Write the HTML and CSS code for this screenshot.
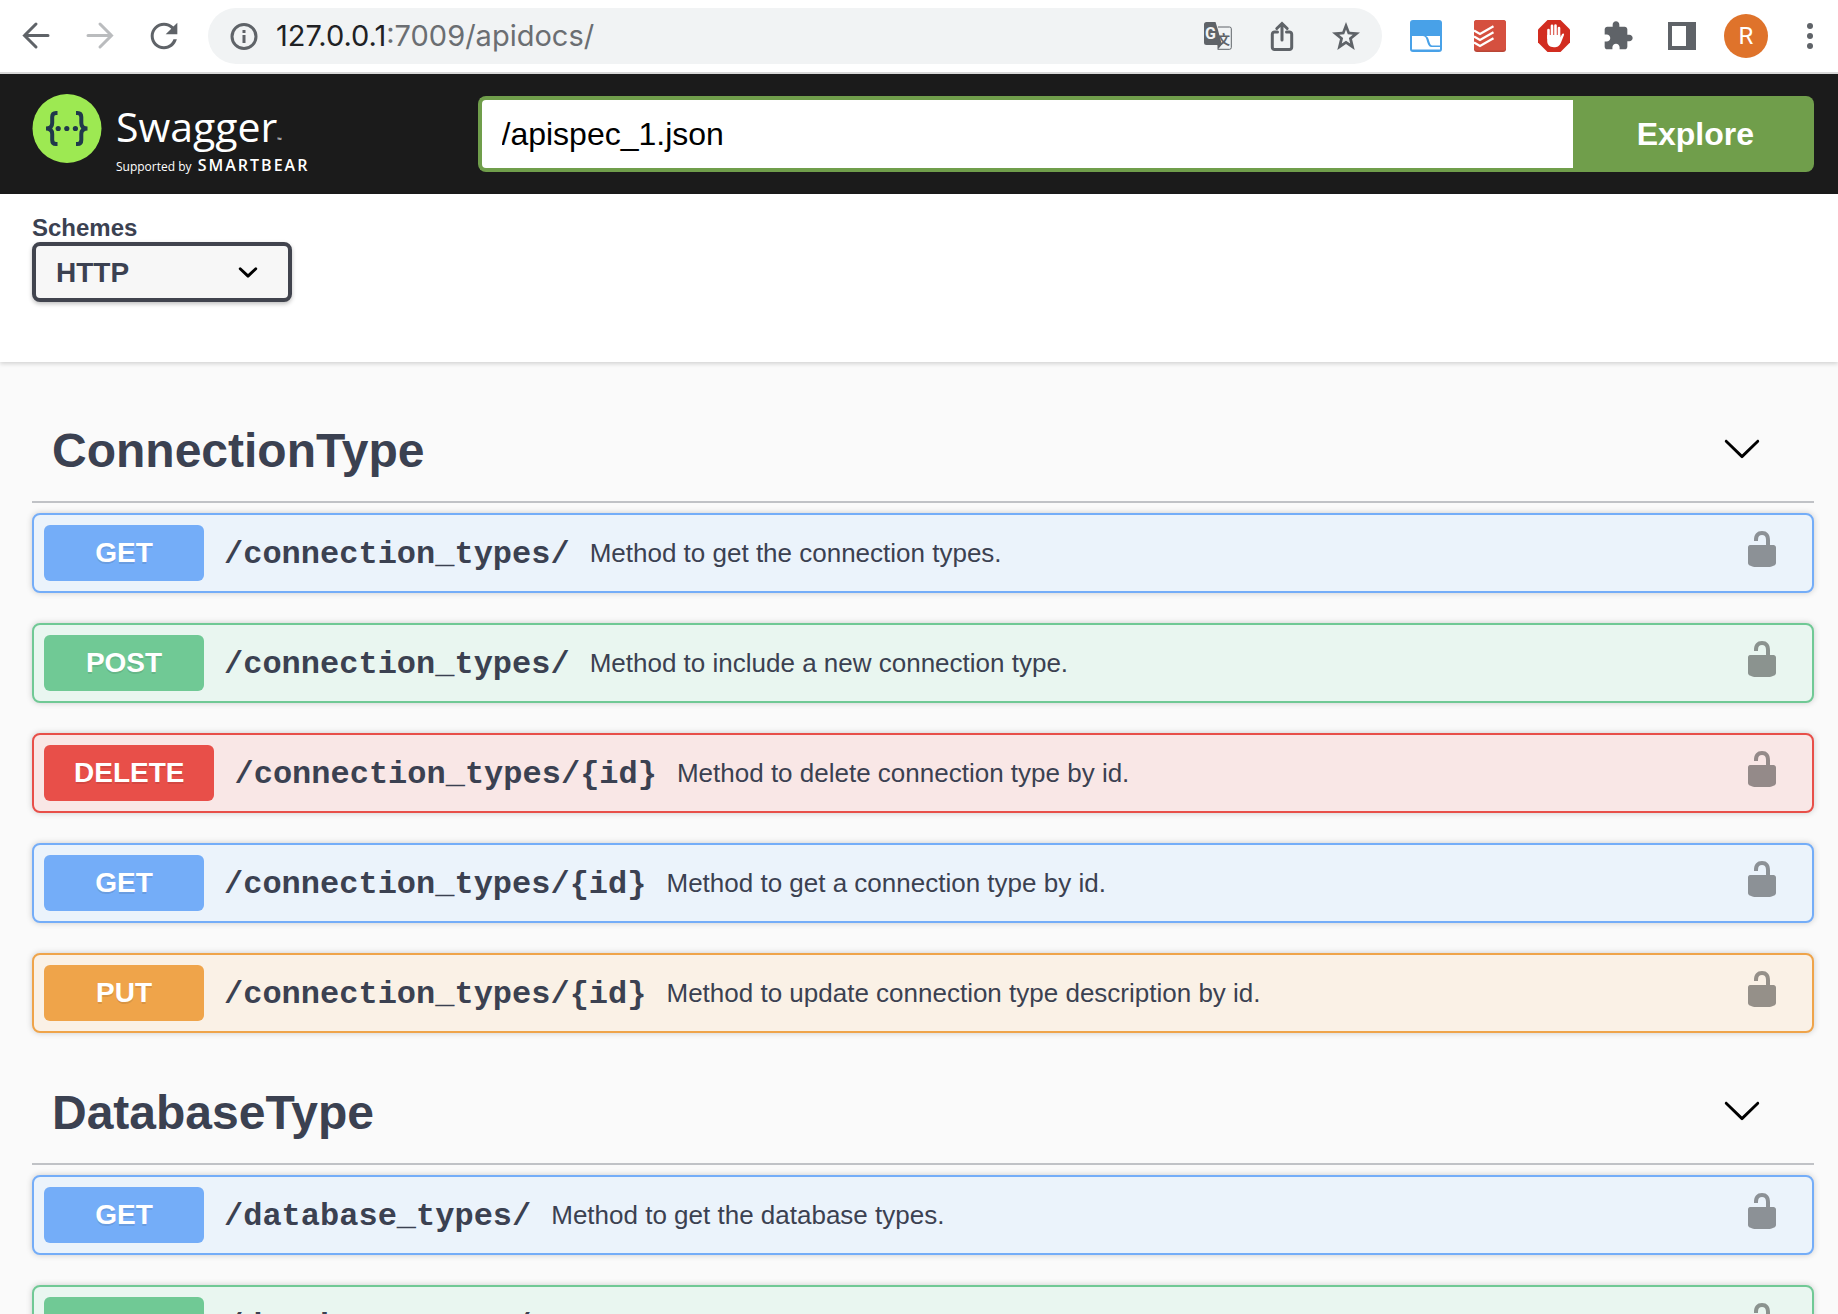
FILE: index.html
```html
<!DOCTYPE html>
<html lang="en">
<head>
<meta charset="utf-8">
<title>Swagger UI</title>
<link rel="stylesheet" href="styles.css">
</head>
<body>
<svg class="defs" aria-hidden="true">
  <symbol id="unlocked" viewBox="0 0 20 20"><path d="M15.8 8H14V5.6C14 2.703 12.665 1 10 1 7.334 1 6 2.703 6 5.6V6h2v-.801C8 3.754 8.797 3 10 3c1.203 0 2 .754 2 2.199V8H4c-.553 0-1 .646-1 1.199V17c0 .549.428 1.139.951 1.307l1.197.387C5.672 18.861 6.55 19 7.1 19h5.8c.549 0 1.428-.139 1.951-.307l1.196-.387c.524-.167.953-.757.953-1.306V9.199C17 8.646 16.352 8 15.8 8z"/></symbol>
  <symbol id="large-arrow" viewBox="0 0 20 20"><path d="M17.418 6.109c.272-.268.709-.268.979 0s.271.701 0 .969l-7.908 7.83c-.27.268-.707.268-.979 0l-7.908-7.83c-.27-.268-.27-.701 0-.969.271-.268.709-.268.979 0L10 13.25l7.418-7.141z"/></symbol>
</svg>

<nav class="toolbar" aria-label="Browser">
  <button class="tool" aria-label="Back"><svg viewBox="0 0 40 40"><path class="line" d="M32 19.500H8.500M20 8L8.500 19.500L20 31"/></svg></button>
  <button class="tool tool-off" aria-label="Forward"><svg viewBox="0 0 40 40"><path class="line" d="M8 19.500H31.500M20 8L31.500 19.500L20 31"/></svg></button>
  <button class="tool" aria-label="Reload"><svg viewBox="0 0 24 24"><path d="M17.650 6.350C16.200 4.900 14.210 4 12 4c-4.420 0-7.990 3.580-7.990 8s3.570 8 7.990 8c3.730 0 6.840-2.550 7.730-6h-2.080c-.820 2.330-3.040 4.200-5.650 4.200-3.420 0-6.200-2.780-6.200-6.200s2.780-6.200 6.200-6.200c1.710 0 3.240.69 4.360 1.840L13 11h7V4z"/></svg></button>

  <div class="omnibox">
    <svg class="small-icon" viewBox="0 0 28 28"><circle class="line" cx="14" cy="14.500" r="12"/><path d="M12.500 8h3v3h-3zM12.500 13h3v8h-3z"/></svg>
    <div class="url" role="textbox" contenteditable="true" spellcheck="false" aria-label="Address"><span class="host">127.0.0.1</span>:7009/apidocs/</div>
    <button class="small-icon" aria-label="Translate"><svg viewBox="0 0 28 28"><path class="thin" d="M14 5H25.500a1.800 1.800 0 0 1 1.800 1.800V25.500a1.800 1.800 0 0 1-1.800 1.800H14"/><path d="M2.500 0H11.500L14 8L18 23H13.500V28L17.500 23H2.500A2.500 2.500 0 0 1 0 20.500V2.500A2.500 2.500 0 0 1 2.500 0z"/><text class="glyph-g" x="1" y="17">G</text><text class="glyph-wen" x="13" y="22">文</text></svg></button>
    <button class="small-icon" aria-label="Share"><svg viewBox="0 0 28 28"><path class="line" d="M9.500 10H6.500A2.200 2.200 0 0 0 4.300 12.200V25.300A2.200 2.200 0 0 0 6.500 27.500H21.500A2.200 2.200 0 0 0 23.700 25.300V12.200A2.200 2.200 0 0 0 21.500 10H18.500M14 18V2M8.800 6.500L14 1.500L19.200 6.500"/></svg></button>
    <button class="small-icon" aria-label="Bookmark this page"><svg viewBox="0 0 28 28"><path fill-rule="evenodd" d="M14 0L17.700 9.700L28 10.400L20 17L22.700 28L14 22L5.300 28L8 17L0 10.400L10.300 9.700zM14 7.500L12.200 12.300L7.200 12.700L11.100 16L9.800 21.500L14 18.700L18.200 21.500L16.900 16L20.800 12.700L15.800 12.300z"/></svg></button>
  </div>

  <button class="tool" aria-label="Screen extension"><svg viewBox="0 0 40 40"><rect x="4" y="4" width="32" height="32" rx="3" fill="#48a1e8"/><path fill="#fff" d="M6 20H17C22 20 20 30 25 31L34 31V33.500H6z"/><path fill="#fff" d="M20 20H34V29.500H26C23 29 23.500 21 20 20z"/></svg></button>
  <button class="tool" aria-label="Todoist"><svg viewBox="0 0 40 40"><rect x="4" y="4" width="32" height="32" rx="3" fill="#b94535"/><rect x="4" y="4" width="32" height="30.500" rx="3" fill="#d5503f"/><path fill="none" stroke="#fff" stroke-width="2.200" d="M4 14.500L10 18L23.500 10.200M4 20.500L10 24L23.500 16.200M4 26.500L10 30L23.500 22.200"/></svg></button>
  <button class="tool" aria-label="AdBlock"><svg viewBox="0 0 40 40"><path fill="#d22d20" d="M13.500 4H26.500L36 13.500V26.500L26.500 36H13.500L4 26.500V13.500z"/><path fill="none" stroke="#fff" stroke-width="2.600" stroke-linecap="round" d="M14.500 14V22M18 9.800V20M21.500 9.500V20M25 12V22"/><path fill="#fff" d="M13.200 19H26.300V21.500L28 18.200C28.800 16.800 30.500 17.500 30 19L27 26.500C25.500 30 23.500 31.200 20 31.200C15.500 31.200 13.200 28.500 13.200 25z"/></svg></button>
  <button class="tool" aria-label="Extensions"><svg viewBox="-3 -3 30 30"><path d="M20.500 11H19V7c0-1.100-.9-2-2-2h-4V3.500C13 2.120 11.880 1 10.500 1S8 2.120 8 3.500V5H4c-1.100 0-1.990.9-1.990 2v3.800H3.500c1.490 0 2.700 1.210 2.700 2.700s-1.210 2.700-2.700 2.700H2V20c0 1.100.9 2 2 2h3.800v-1.500c0-1.490 1.210-2.700 2.700-2.700 1.490 0 2.700 1.210 2.700 2.700V22H17c1.100 0 2-.9 2-2v-4h1.500c1.380 0 2.500-1.120 2.500-2.500S21.880 11 20.500 11z"/></svg></button>
  <button class="tool" aria-label="Side panel"><svg viewBox="0 0 40 40"><path fill-rule="evenodd" d="M6 6H34V34H6zM10 10V30H24V10z"/></svg></button>
  <button class="avatar" aria-label="Profile R">R</button>
  <button class="tool" aria-label="Menu"><svg viewBox="0 0 40 40"><circle cx="20" cy="10" r="3"/><circle cx="20" cy="20" r="3"/><circle cx="20" cy="30" r="3"/></svg></button>
</nav>

<div class="page">
  <header class="topbar">
    <a class="logo" href="#">
      <svg class="logo-mark" viewBox="0 0 70 70"><circle cx="35" cy="34.500" r="34.500" fill="#9de952"/><g fill="none" stroke="#20394b" stroke-width="4"><path d="M25.500 19H24C21 19 20.200 20.500 20.200 23V29C20.200 32 18.500 34.500 14 34.500C18.500 34.500 20.200 37 20.200 40V46C20.200 48.500 21 50 24 50H25.500"/><path d="M44 19H45.500C48.500 19 49.300 20.500 49.300 23V29C49.300 32 51 34.500 55.500 34.500C51 34.500 49.300 37 49.300 40V46C49.300 48.500 48.500 50 45.500 50H44"/></g><g fill="#20394b"><circle cx="26.200" cy="34.500" r="2.600"/><circle cx="34.800" cy="34.500" r="2.600"/><circle cx="43.400" cy="34.500" r="2.600"/></g></svg>
      <span class="logo-text">
        <span class="logo-name">Swagger<small class="tm">™</small></span>
        <span class="logo-by">Supported by <b class="brand">SMARTBEAR</b></span>
      </span>
    </a>
    <form class="explore">
      <input class="explore-input" type="text" value="/apispec_1.json" aria-label="API specification URL">
      <button class="explore-button" type="button">Explore</button>
    </form>
  </header>

  <section class="schemes">
    <label class="schemes-label" for="scheme">Schemes</label>
    <div class="select">
      <select id="scheme"><option>HTTP</option></select>
      <svg class="select-arrow" viewBox="0 0 20 20"><path d="M13.418 7.859a.695.695 0 01.978 0 .68.68 0 010 .969l-3.908 3.830a.697.697 0 01-.979 0l-3.908-3.830a.68.68 0 010-.969.695.695 0 01.978 0L10 11l3.418-3.141z"/></svg>
    </div>
  </section>

  <main class="operations">
    <section class="tag">
      <div class="tag-head"><h2>ConnectionType</h2><button class="toggle" aria-label="Collapse ConnectionType"><svg><use href="#large-arrow"/></svg></button></div>
      <div class="op get"><button class="op-main"><span class="method">GET</span><span class="path">/connection_types/</span><span class="summary">Method to get the connection types.</span></button><button class="lock" aria-label="Authorize"><svg><use href="#unlocked"/></svg></button></div>
      <div class="op post"><button class="op-main"><span class="method">POST</span><span class="path">/connection_types/</span><span class="summary">Method to include a new connection type.</span></button><button class="lock" aria-label="Authorize"><svg><use href="#unlocked"/></svg></button></div>
      <div class="op delete"><button class="op-main"><span class="method">DELETE</span><span class="path">/connection_types/{id}</span><span class="summary">Method to delete connection type by id.</span></button><button class="lock" aria-label="Authorize"><svg><use href="#unlocked"/></svg></button></div>
      <div class="op get"><button class="op-main"><span class="method">GET</span><span class="path">/connection_types/{id}</span><span class="summary">Method to get a connection type by id.</span></button><button class="lock" aria-label="Authorize"><svg><use href="#unlocked"/></svg></button></div>
      <div class="op put"><button class="op-main"><span class="method">PUT</span><span class="path">/connection_types/{id}</span><span class="summary">Method to update connection type description by id.</span></button><button class="lock" aria-label="Authorize"><svg><use href="#unlocked"/></svg></button></div>
    </section>
    <section class="tag">
      <div class="tag-head"><h2>DatabaseType</h2><button class="toggle" aria-label="Collapse DatabaseType"><svg><use href="#large-arrow"/></svg></button></div>
      <div class="op get"><button class="op-main"><span class="method">GET</span><span class="path">/database_types/</span><span class="summary">Method to get the database types.</span></button><button class="lock" aria-label="Authorize"><svg><use href="#unlocked"/></svg></button></div>
      <div class="op post"><button class="op-main"><span class="method">POST</span><span class="path">/database_types/</span><span class="summary">Method to include a new database type.</span></button><button class="lock" aria-label="Authorize"><svg><use href="#unlocked"/></svg></button></div>
    </section>
  </main>
</div>
</body>
</html>
```

FILE: styles.css
```css
* { box-sizing: border-box; }

body {
  margin: 0;
  height: 100vh;
  display: flex;
  flex-direction: column;
  overflow: hidden;
  background: #fafafa;
  color: #3b4151;
  font-family: "Liberation Sans", Arial, sans-serif;
}

button {
  margin: 0;
  padding: 0;
  border: 0;
  background: none;
  color: inherit;
  font: inherit;
  cursor: pointer;
}

svg { display: block; }

.defs { display: none; }

/* Browser toolbar */
.toolbar {
  flex: none;
  display: flex;
  align-items: center;
  gap: 24px;
  padding: 8px 8px 8px 16px;
  border-bottom: 2px solid #d8d8d8;
  background: #fff;
  color: #5f6368;
}

.tool { flex: none; width: 40px; height: 40px; }
.tool-off { color: #babcbe; }
.toolbar svg { width: 100%; height: 100%; fill: currentColor; }

.toolbar .line {
  fill: none;
  stroke: currentColor;
  stroke-width: 3;
  stroke-linecap: round;
}

.toolbar .thin { fill: none; stroke: currentColor; stroke-width: 1; }

.omnibox {
  flex: 1;
  display: flex;
  align-items: center;
  gap: 36px;
  height: 56px;
  padding: 0 22px;
  border-radius: 28px;
  background: #f1f3f4;
}

.toolbar .small-icon { flex: none; width: 28px; height: 28px; overflow: visible; }
.small-icon svg { overflow: visible; }

.url {
  flex: 1;
  margin-left: -18px;
  outline: 0;
  color: #6b6e72;
  font: 29px/32px Inter, sans-serif;
}

.host { color: #202124; }
.glyph-g { fill: #f1f3f4; font: bold 16px Roboto, sans-serif; }
.glyph-wen { font: bold 13px "Noto Sans CJK SC", sans-serif; }

.avatar {
  flex: none;
  width: 44px;
  height: 44px;
  margin: 0 -2px;
  border-radius: 50%;
  background: #df732b;
  color: #fff;
  font: 24px/44px Roboto, sans-serif;
}

/* Swagger top bar */
.page { flex: 1; min-height: 0; overflow: hidden; }

.topbar {
  display: flex;
  align-items: center;
  padding: 20px 24px 20px 32px;
  background: #1b1b1b;
}

.logo {
  flex: 1;
  display: flex;
  gap: 14px;
  height: 80px;
  color: #fff;
  text-decoration: none;
  white-space: nowrap;
}

.logo-mark { flex: none; width: 70px; height: 70px; }
.logo-text { display: flex; flex-direction: column; font-family: "Open Sans", sans-serif; }
.logo-name { font-size: 41px; line-height: 64px; font-weight: 400; }
.tm { font-size: 6px; line-height: 8px; }
.logo-by { font-size: 12px; line-height: 14px; }
.brand { margin-left: 3px; font-size: 16px; line-height: 14px; font-weight: 600; letter-spacing: 2px; }

.explore { flex: 3; display: flex; height: 76px; }

.explore-input {
  flex: 1;
  min-width: 0;
  padding: 0 20px;
  border: 4px solid #709e4b;
  border-right: 0;
  border-radius: 8px 0 0 8px;
  outline: 0;
  background: #fff;
  color: #000;
  font: 32px "Liberation Sans", Arial, sans-serif;
}

.explore-button {
  padding: 0 60px 0 64px;
  border-radius: 0 8px 8px 0;
  background: #709e4b;
  color: #fff;
  font-size: 32px;
  font-weight: bold;
}

/* Schemes */
.schemes {
  padding: 20px 32px 60px;
  background: #fff;
  box-shadow: 0 2px 4px rgba(0, 0, 0, .15);
}

.schemes-label { display: block; font-size: 24px; line-height: 28px; font-weight: bold; }
.select { display: grid; width: 260px; }

.select select {
  grid-area: 1 / 1;
  height: 60px;
  padding: 0 20px;
  border: 4px solid #41444e;
  border-radius: 8px;
  appearance: none;
  background: #f7f7f7;
  box-shadow: 0 2px 4px rgba(0, 0, 0, .25);
  color: #3b4151;
  font: bold 28px "Liberation Sans", Arial, sans-serif;
}

.select-arrow {
  grid-area: 1 / 1;
  place-self: center end;
  width: 40px;
  height: 40px;
  margin-right: 24px;
  pointer-events: none;
}

/* Operations */
.operations { padding: 39px 24px 0 32px; }

.tag-head {
  display: flex;
  align-items: center;
  justify-content: space-between;
  height: 102px;
  margin-bottom: 10px;
  padding: 0 52px 0 20px;
  border-bottom: 2px solid rgba(59, 65, 81, .3);
}

h2 { margin: 0; font-size: 48px; line-height: 56px; }
.toggle { padding-bottom: 6px; color: #000; }
.toggle svg, .lock svg { width: 40px; height: 40px; }

.op {
  display: flex;
  align-items: center;
  margin-bottom: 30px;
  padding: 10px 30px 10px 10px;
  border: 2px solid;
  border-radius: 8px;
  box-shadow: 0 0 6px rgba(0, 0, 0, .19);
}

.op-main { flex: 1; display: flex; align-items: center; text-align: left; }

.method {
  min-width: 160px;
  padding: 12px 30px;
  border-radius: 6px;
  color: #fff;
  font-size: 28px;
  line-height: 32px;
  font-weight: bold;
  text-align: center;
  text-shadow: 0 2px 0 rgba(0, 0, 0, .1);
}

.path { padding: 4px 20px 0; font: bold 32px/36px "Liberation Mono", "Courier New", monospace; }
.summary { font-size: 26px; line-height: 30px; }
.lock { height: 48px; padding-bottom: 8px; color: #000; opacity: .4; }

.get { border-color: #74adf8; background: #ebf3fb; }
.get .method { background: #74adf8; }
.post { border-color: #70c995; background: #e9f6f0; }
.post .method { background: #70c995; }
.delete { border-color: #e84f49; background: #f9e7e6; }
.delete .method { background: #e84f49; }
.put { border-color: #efa44a; background: #faf1e6; }
.put .method { background: #efa44a; }
```
